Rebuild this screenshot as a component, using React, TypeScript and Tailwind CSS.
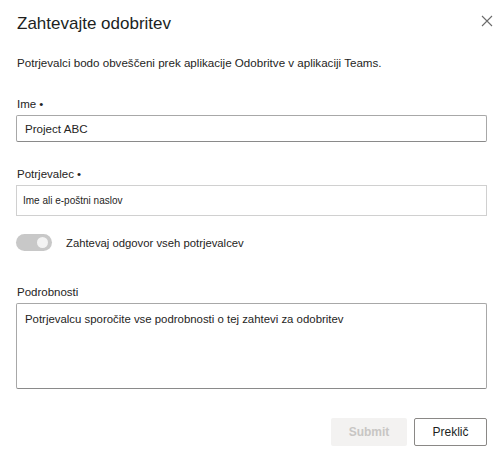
export default function App() {
  return (
    <main className="h-[455px] w-[500px] bg-white pl-4 pr-[13px] pt-[13px] font-['Liberation_Sans',Arial,sans-serif] text-[#252423]">
      {/* Header */}
      <div className="flex items-start justify-between">
        <h1 className="pl-px text-[17px] leading-[22px] font-normal text-[#201f1e]">Zahtevajte odobritev</h1>
        <svg className="mr-[-6px] mt-[2px] h-[12px] w-[12px]" viewBox="0 0 12 12" fill="none">
          <path d="M1 1L11 11M11 1L1 11" stroke="#6b6b6b" strokeWidth="1.1" />
        </svg>
      </div>

      <p className="mt-5 pl-px text-[11.6px] leading-4">
        Potrjevalci bodo obveščeni prek aplikacije Odobritve v aplikaciji Teams.
      </p>

      {/* Ime */}
      <label className="mt-[25px] block pl-px text-[11.5px] leading-4">Ime •</label>
      <div className="mt-[3px] flex h-[27px] items-center rounded-[2px] border border-[#a8a8a8] border-b-[#8a8a8a] px-2 text-[11.6px]">
        Project ABC
      </div>

      {/* Potrjevalec */}
      <label className="mt-6 block pl-px text-[11.5px] leading-4">Potrjevalec •</label>
      <div className="mt-[3px] flex h-[31px] items-center border border-[#d0d0d0] px-[6px] text-[10px]">
        Ime ali e-poštni naslov
      </div>

      {/* Toggle */}
      <div className="mt-[18px] flex h-[17px] items-center gap-[14px]">
        <div className="flex h-[17px] w-[36px] items-center justify-end rounded-full bg-[#c8c8c8] pr-[4px]">
          <div className="h-[11px] w-[11px] rounded-full bg-[#f3f3f3]" />
        </div>
        <span className="text-[11.3px] leading-4">Zahtevaj odgovor vseh potrjevalcev</span>
      </div>

      {/* Podrobnosti */}
      <label className="mt-[33px] block pl-px text-[11.5px] leading-4">Podrobnosti</label>
      <div className="mt-[3px] h-[86px] rounded-[2px] border border-[#a8a8a8] border-b-[#8a8a8a] px-2 pt-[7px] text-[11.4px] leading-4">
        Potrjevalcu sporočite vse podrobnosti o tej zahtevi za odobritev
      </div>

      {/* Buttons */}
      <div className="mt-[29px] flex justify-end gap-[7px]">
        <button className="h-[28px] w-[76px] rounded-[2px] bg-[#f3f2f1] text-[12px] font-bold text-[#c8c6c4]">
          Submit
        </button>
        <button className="h-[28px] w-[73px] rounded-[2px] border border-[#8a8886] bg-white text-[12px] text-[#201f1e]">
          Preklič
        </button>
      </div>
    </main>
  );
}
